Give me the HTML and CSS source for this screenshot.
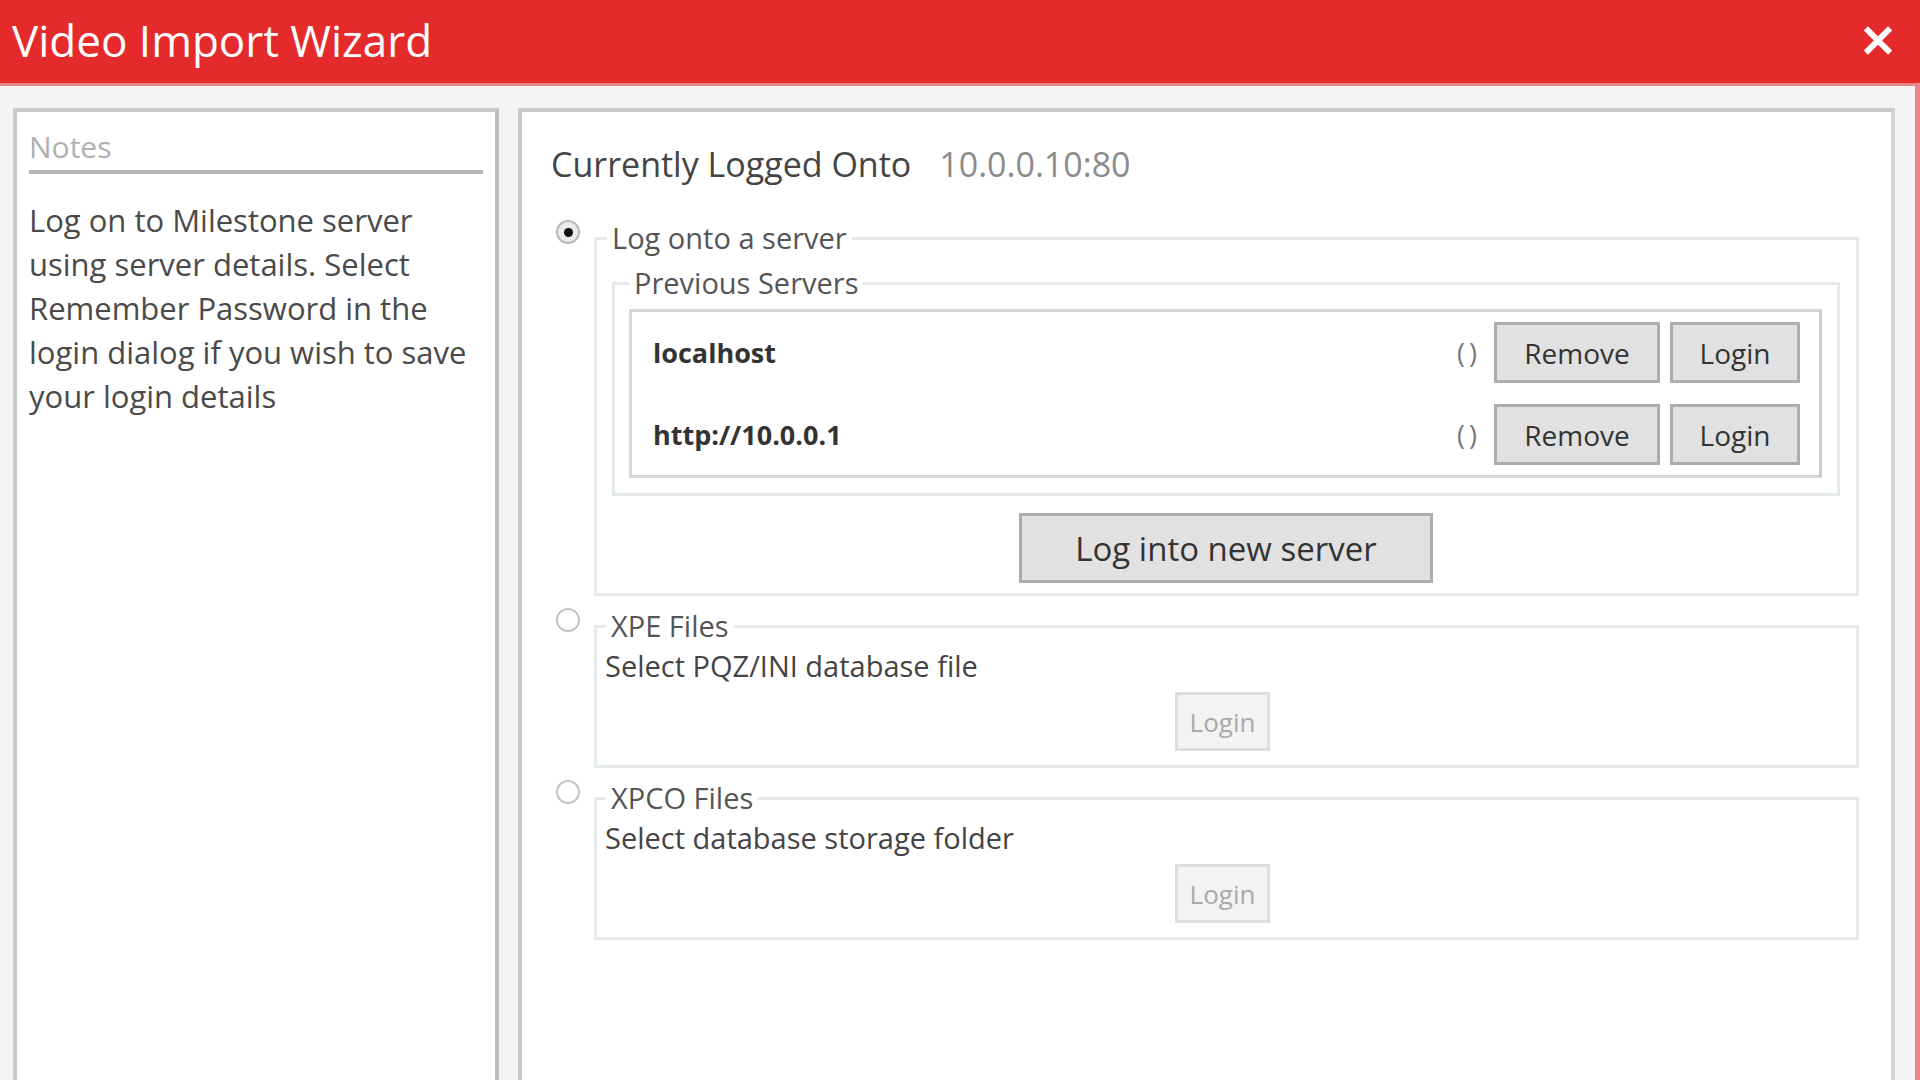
FILE: index.html
```html
<!DOCTYPE html>
<html lang="en">
<head>
    <meta charset="UTF-8">
    <meta name="viewport" content="width=device-width, initial-scale=1.0">
    <title>Video Import Wizard</title>
    <link rel="stylesheet" href="styles.css">
</head>
<body>
    <div class="window">
        <header class="titlebar">
            <span class="title">Video Import Wizard</span>
            <span class="close">
                <svg width="28" height="29" viewBox="0 0 28 29">
                    <path d="M4 4.5 L24 24.5 M24 4.5 L4 24.5" stroke="#fff" stroke-width="6" stroke-linecap="square"/>
                </svg>
            </span>
        </header>

        <div class="content">
            <aside class="notes">
                <div class="notes-title">Notes</div>
                <p class="notes-text">Log on to Milestone server<br>using server details. Select<br>Remember Password in the<br>login dialog if you wish to save<br>your login details</p>
            </aside>

            <main class="wizard">
                <div class="current">
                    <span class="current-label">Currently Logged Onto</span>
                    <span class="current-value">10.0.0.10:80</span>
                </div>

                <div class="option">
                    <span class="radio checked"></span>
                    <fieldset class="group">
                        <legend>Log onto a server</legend>
                        <fieldset class="group inner">
                            <legend>Previous Servers</legend>
                            <div class="server-list">
                                <div class="server-row">
                                    <span class="server-name">localhost</span>
                                    <span class="server-extra">()</span>
                                    <button class="btn btn-remove">Remove</button>
                                    <button class="btn btn-login">Login</button>
                                </div>
                                <div class="server-row">
                                    <span class="server-name">http://10.0.0.1</span>
                                    <span class="server-extra">()</span>
                                    <button class="btn btn-remove">Remove</button>
                                    <button class="btn btn-login">Login</button>
                                </div>
                            </div>
                        </fieldset>
                        <div class="center">
                            <button class="btn btn-big">Log into new server</button>
                        </div>
                    </fieldset>
                </div>

                <div class="option">
                    <span class="radio"></span>
                    <fieldset class="group file-group">
                        <legend>XPE Files</legend>
                        <div class="file-text">Select PQZ/INI database file</div>
                        <div class="center">
                            <button class="btn btn-disabled" disabled>Login</button>
                        </div>
                    </fieldset>
                </div>

                <div class="option">
                    <span class="radio"></span>
                    <fieldset class="group file-group">
                        <legend>XPCO Files</legend>
                        <div class="file-text">Select database storage folder</div>
                        <div class="center">
                            <button class="btn btn-disabled" disabled>Login</button>
                        </div>
                    </fieldset>
                </div>
            </main>
        </div>
    </div>
</body>
</html>
```

FILE: styles.css
```css
* {
    box-sizing: border-box;
}

body {
    margin: 0;
    padding: 0;
    background: #f4f4f4;
    font-family: 'Open Sans', 'Noto Sans', sans-serif;
    color: #444;
    overflow: hidden;
}

.window {
    width: 1920px;
    height: 1080px;
    display: flex;
    flex-direction: column;
}

.titlebar {
    height: 86px;
    background-color: #e52a2c;
    border-bottom: 3px solid #e98587;
    display: flex;
    align-items: center;
    justify-content: space-between;
    padding: 0 28px 0 12px;
}

.title {
    color: white;
    font-size: 44px;
    line-height: 1;
    margin-top: -4px;
}

.close {
    display: flex;
    margin-top: -2px;
}

.content {
    flex: 1;
    display: flex;
    gap: 19px;
    padding: 22px 20px 0 13px;
    border-right: 5px solid #e8878a;
    background: #f4f4f4;
}

.notes {
    width: 486px;
    background: white;
    border: 4px solid #cacaca;
    border-right-color: #bcbcbc;
    border-bottom: none;
    padding: 15px 12px 0 12px;
}

.notes-title {
    font-size: 30px;
    line-height: 40px;
    color: #b0b0b0;
    padding-bottom: 3px;
    border-bottom: 4px solid #b4b4b4;
}

.notes-text {
    margin: 24px 0 0 0;
    font-size: 31px;
    line-height: 44px;
    color: #4a4a4a;
}

.wizard {
    flex: 1;
    background: white;
    border: 4px solid #c9c9c9;
    border-right-color: #d2d2d2;
    border-bottom: none;
    padding: 30px 32px 0 29px;
}

.current {
    display: flex;
    gap: 28px;
    font-size: 34px;
    line-height: 44px;
    margin-bottom: 34px;
}

.current-label {
    color: #444;
}

.current-value {
    color: #8c8c8c;
}

.option {
    display: flex;
    align-items: flex-start;
    gap: 14px;
    margin-bottom: 12px;
}

.radio {
    width: 24px;
    height: 24px;
    margin-left: 5px;
    flex-shrink: 0;
    border: 2px solid #c4c4c4;
    border-radius: 50%;
    background: white;
    display: flex;
    align-items: center;
    justify-content: center;
}

.radio.checked {
    border-color: #b9b9b9;
    background: #ececec;
}

.radio.checked::after {
    content: "";
    width: 9px;
    height: 9px;
    border-radius: 50%;
    background: #111;
}

.group {
    flex: 1;
    margin: 0;
    min-width: 0;
    border: 3px solid #e4e9ec;
    padding: 9px 16px 10px 15px;
}

.group legend {
    font-size: 29px;
    line-height: 36px;
    color: #555;
    padding: 0 5px;
    margin-left: -5px;
}

.group.inner {
    padding: 8px 15px 15px 14px;
}

.group.inner legend {
    margin-left: 0;
}

.server-list {
    border: 3px solid #d7d7d7;
    border-right-color: #cccccc;
    padding: 10px 19px 10px 21px;
    display: flex;
    flex-direction: column;
    gap: 21px;
}

.server-row {
    display: flex;
    align-items: center;
    gap: 10px;
}

.server-name {
    flex: 1;
    font-size: 27px;
    font-weight: bold;
    color: #333;
}

.server-extra {
    font-size: 27px;
    color: #777;
    letter-spacing: 4px;
    margin-right: 3px;
}

.btn {
    font-family: 'Open Sans', 'Noto Sans', sans-serif;
    font-size: 28px;
    color: #333;
    background: #e1e1e1;
    border: 3px solid #adadad;
    height: 61px;
    padding: 0 24px;
    cursor: pointer;
}

.btn-remove {
    width: 166px;
}

.btn-login {
    width: 130px;
}

.center {
    display: flex;
    justify-content: center;
}

.btn-big {
    margin-top: 17px;
    height: 70px;
    font-size: 33px;
    padding: 0 48px;
    width: 414px;
}

.file-group {
    padding: 4px 16px 14px 8px;
}

.file-group legend {
    margin-left: 1px;
}

.file-text {
    font-size: 29px;
    line-height: 36px;
    color: #444;
}

.btn-disabled {
    margin-top: 8px;
    height: 59px;
    width: 95px;
    padding: 0;
    font-size: 26px;
    color: #a9a9a9;
    background: #f3f3f3;
    border-color: #dedede;
    cursor: default;
}
```
